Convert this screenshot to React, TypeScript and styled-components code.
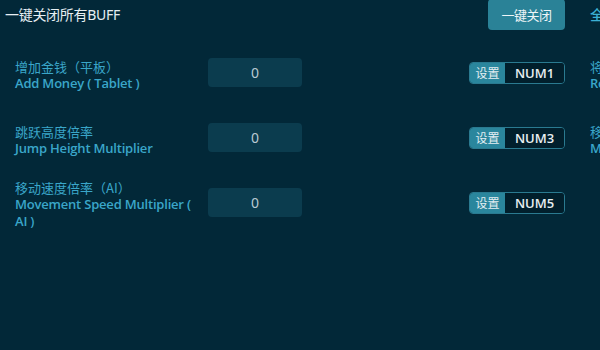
import React from "react";
import styled, { createGlobalStyle } from "styled-components";

const GlobalStyle = createGlobalStyle`
  html, body {
    margin: 0;
    padding: 0;
    background: #022838;
    overflow: hidden;
  }
  body {
    font-family: "Noto Sans", "Noto Sans CJK SC", sans-serif;
  }
`;

const Page = styled.div`
  width: 1180px;
  height: 350px;
  background: #022838;
  display: grid;
  grid-template-columns: 565px 565px;
  column-gap: 25px;
  align-content: start;
`;

const Column = styled.div`
  display: flex;
  flex-direction: column;
`;

const Header = styled.div<{ $pad?: number }>`
  height: 30px;
  display: flex;
  align-items: center;
  justify-content: space-between;
  padding-left: ${(p) => p.$pad ?? 0}px;
  margin-bottom: 20px;
`;

const Title = styled.div`
  color: #e6eef2;
  font-size: 14px;
  letter-spacing: -0.3px;
  margin-top: -2px;
`;

const TopButton = styled.button`
  width: 77px;
  height: 31px;
  margin-top: -1px;
  border: none;
  border-radius: 4px;
  background: #2a8297;
  color: #eef5f8;
  font-family: "Noto Sans CJK SC", sans-serif;
  font-size: 13px;
  letter-spacing: -0.5px;
  padding: 0;
`;

const TextButton = styled.div`
  color: #3cb0d4;
  font-family: "Noto Sans CJK SC", sans-serif;
  font-size: 14px;
  font-weight: 500;
  margin-top: -2px;
`;

const Rows = styled.div<{ $pad?: number }>`
  display: flex;
  flex-direction: column;
  gap: 20px;
  padding-left: ${(p) => p.$pad ?? 0}px;
`;

const Row = styled.div`
  height: 45px;
  display: flex;
  align-items: center;
`;

const Label = styled.div`
  width: 186px;
  color: #3aa6c9;
  font-size: 13px;
  line-height: 17px;
  margin-top: 4px;
`;

const LabelCn = styled.div`
  font-family: "Noto Sans CJK SC", sans-serif;
`;

const LabelEn = styled.div`
  font-family: "Open Sans", "Noto Sans", sans-serif;
  font-weight: 600;
  letter-spacing: -0.2px;
`;

const ValueBox = styled.div`
  margin-left: 7px;
  width: 94px;
  height: 29px;
  flex: none;
  border-radius: 4px;
  background: #0b3c4e;
  color: #b9cad2;
  font-size: 14px;
  display: flex;
  align-items: center;
  justify-content: center;
`;

const Hotkey = styled.div`
  margin-left: auto;
  flex: none;
  display: flex;
  height: 22px;
  width: 96px;
  border: 1px solid #2a7a90;
  border-radius: 4px;
  box-sizing: border-box;
  overflow: hidden;
`;

const HotkeySet = styled.div`
  width: 35px;
  background: #2a869d;
  color: #e3eef2;
  font-family: "Noto Sans CJK SC", sans-serif;
  font-size: 12px;
  display: flex;
  align-items: center;
  justify-content: center;
`;

const HotkeyKey = styled.div`
  flex: 1;
  background: #011f2c;
  color: #e8eef1;
  font-family: "Open Sans", sans-serif;
  font-weight: 600;
  font-size: 13px;
  display: flex;
  align-items: center;
  justify-content: center;
`;

type Item = { cn: string; en: string; key?: string; value?: string };

const left: Item[] = [
  { cn: "增加金钱（平板）", en: "Add Money ( Tablet )", key: "NUM1", value: "0" },
  { cn: "跳跃高度倍率", en: "Jump Height Multiplier", key: "NUM3", value: "0" },
  { cn: "移动速度倍率（AI）", en: "Movement Speed Multiplier ( AI )", key: "NUM5", value: "0" },
];

const right: Item[] = [
  { cn: "将金钱重置为零", en: "Reset Money to Zero", key: "NUM2" },
  { cn: "移动速度倍率", en: "Movement Speed Multiplier", key: "NUM4", value: "0" },
];

const ItemRow: React.FC<{ item: Item }> = ({ item }) => (
  <Row>
    <Label>
      <LabelCn>{item.cn}</LabelCn>
      <LabelEn>{item.en}</LabelEn>
    </Label>
    {item.value !== undefined && <ValueBox>{item.value}</ValueBox>}
    {item.key && (
      <Hotkey>
        <HotkeySet>设置</HotkeySet>
        <HotkeyKey>{item.key}</HotkeyKey>
      </Hotkey>
    )}
  </Row>
);

export default function App() {
  return (
    <>
      <GlobalStyle />
      <Page>
        <Column>
          <Header $pad={5}>
            <Title>一键关闭所有BUFF</Title>
            <TopButton>一键关闭</TopButton>
          </Header>
          <Rows $pad={15}>
            {left.map((it) => (
              <ItemRow key={it.cn} item={it} />
            ))}
          </Rows>
        </Column>
        <Column>
          <Header>
            <TextButton>全部开启</TextButton>
          </Header>
          <Rows>
            {right.map((it) => (
              <ItemRow key={it.cn} item={it} />
            ))}
          </Rows>
        </Column>
      </Page>
    </>
  );
}
